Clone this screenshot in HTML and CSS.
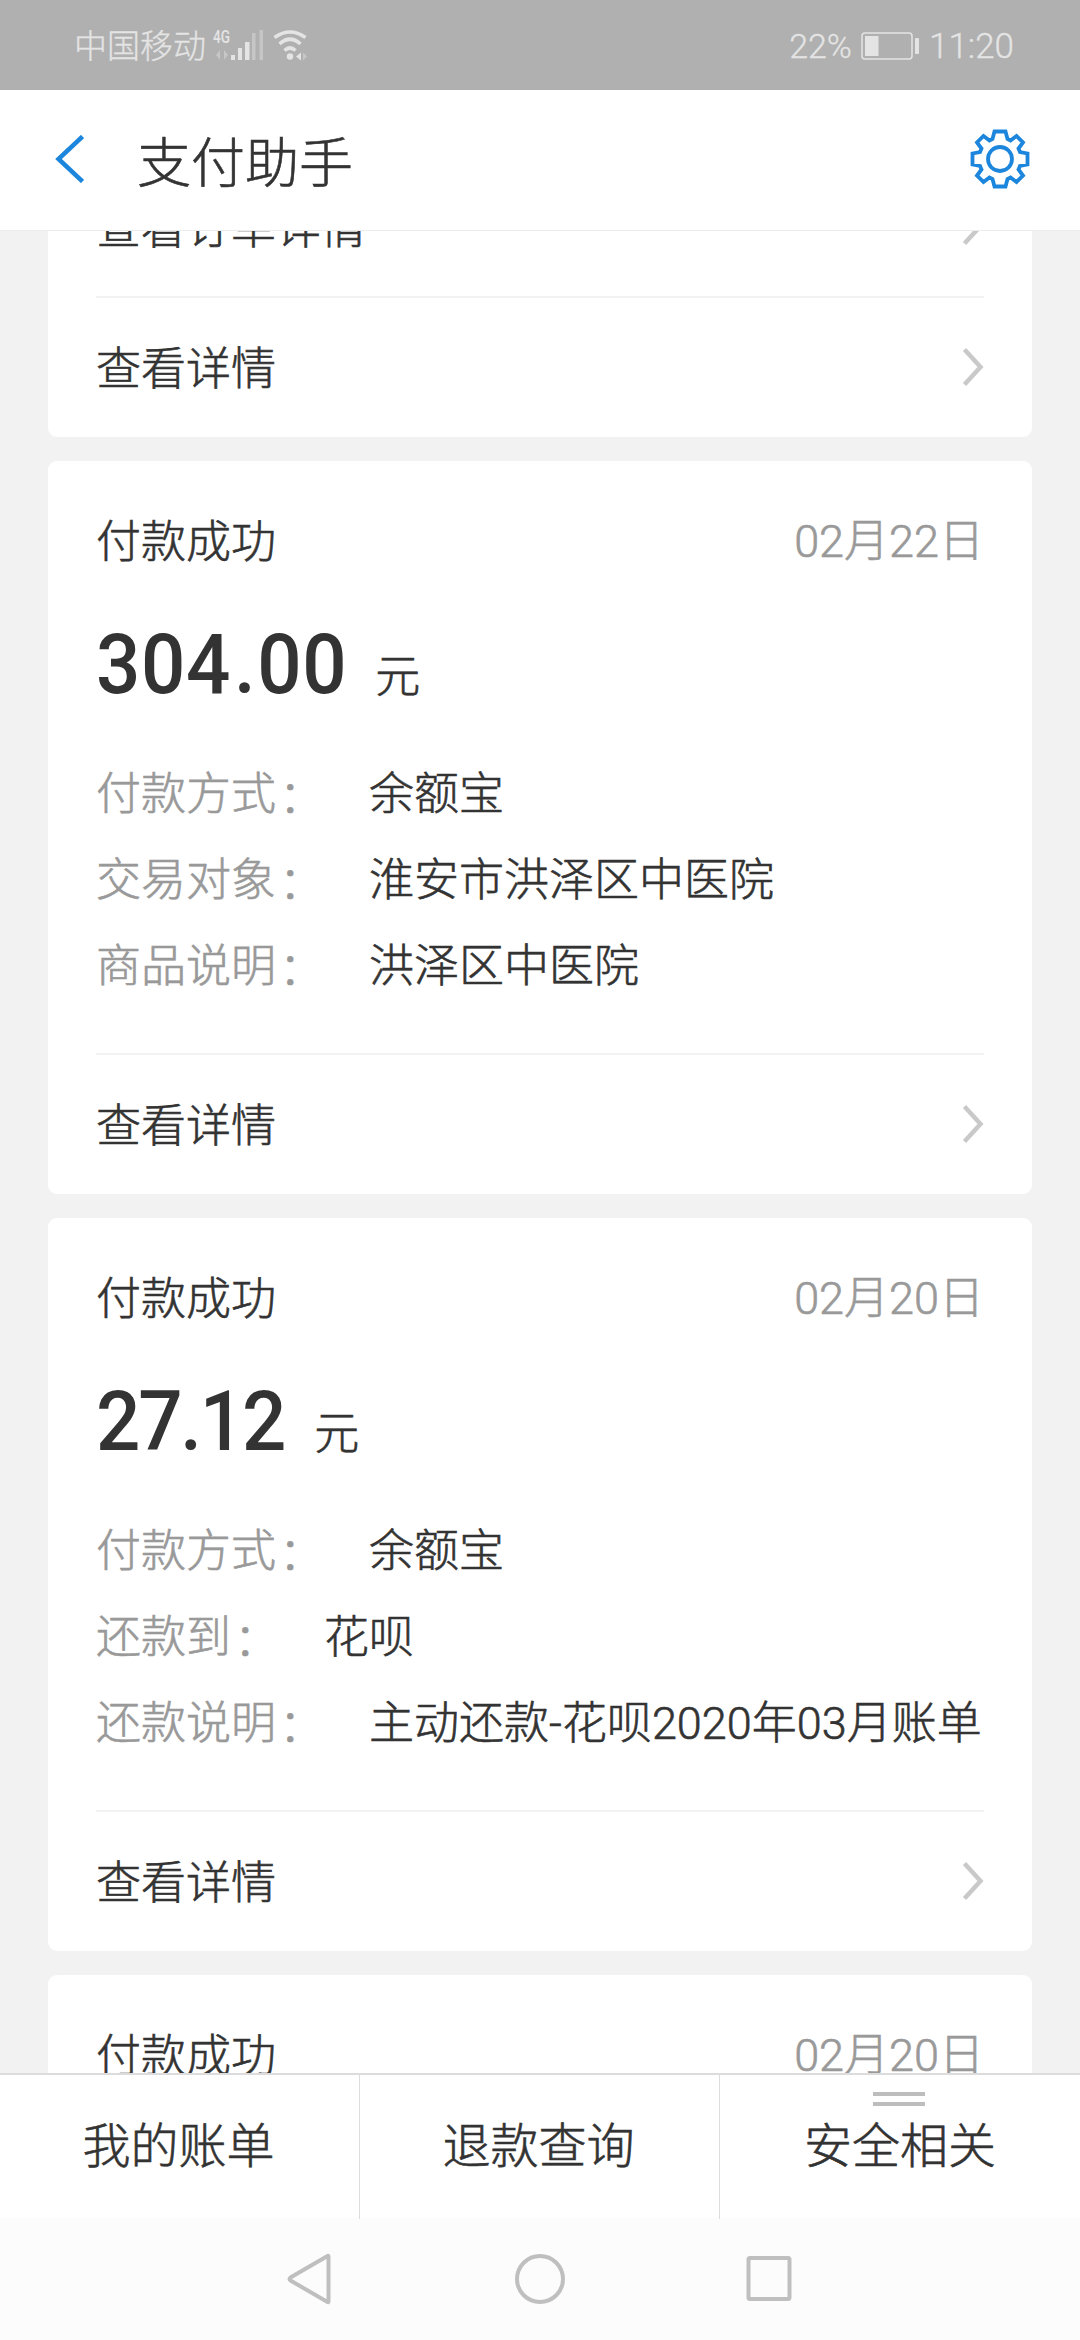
FILE: index.html
```html
<!DOCTYPE html>
<html lang="zh-CN">
<head>
<meta charset="utf-8">
<title>支付助手</title>
<link rel="stylesheet" href="styles.css">
</head>
<body>
<div class="phone">
  <div class="status">
    <span class="carrier">中国移动</span>
    <svg class="signal" viewBox="0 -6 56 48" width="56" height="48">
      <text class="net" x="2" y="16" textLength="17" lengthAdjust="spacingAndGlyphs">4G</text>
      <g class="dim"><path d="M9 23v10l-4-5zM13 23v10l4-5z"/><rect x="41" y="6" width="3.500" height="27"/><rect x="48.500" y="3" width="3.500" height="30"/></g>
      <g class="lit"><rect x="20" y="28" width="4" height="5"/><rect x="27" y="21" width="4" height="12"/><rect x="34" y="15" width="4.500" height="18"/></g>
    </svg>
    <svg class="wifi" viewBox="0 0 40 36" width="40" height="36">
      <g class="arc"><path d="M3.500 10.500Q19 -.5 34.500 10.500"/><path d="M8.500 17Q19 7.500 29.500 17"/><path d="M13.500 23.500Q19 18.500 24.500 23.500"/></g>
      <circle class="lit" cx="19" cy="29.500" r="3.200"/><path class="lit" d="M25 29.500l5-4v8z"/><path class="dim" d="M32 25.500v8l4-4z"/>
    </svg>
    <span class="percent">22%</span>
    <svg class="battery" viewBox="0 0 60 28" width="60" height="28">
      <rect class="shell" x="1" y="1" width="50" height="26" rx="3"/><rect class="lit" x="4" y="4" width="13.500" height="20"/><rect class="lit" x="54" y="6" width="4" height="16" rx="1"/>
    </svg>
    <span class="clock">11:20</span>
  </div>
  <header class="titlebar">
    <svg class="back" viewBox="0 0 30 48" width="30" height="48"><path d="M28.500 1.500L4.500 24L28.500 46.500"/></svg>
    <h1 class="title">支付助手</h1>
    <svg class="gear" viewBox="-30 -30 60 60" width="60" height="60">
      <path d="M-5.500 -27.500H5.500L7.500 -20L10.500 -18.500L16.500 -23L23 -16.500L18.500 -10.500L20 -7L27.500 -5.500V5.500L20 7L18.500 10.500L23 16.500L16.500 23L10.500 18.500L7.500 20L5.500 27.500H-5.500L-7.500 20L-10.500 18.500L-16.500 23L-23 16.500L-18.500 10.500L-20 7L-27.500 5.500V-5.500L-20 -7L-18.500 -10.500L-23 -16.500L-16.500 -23L-10.500 -18.500L-7.500 -20Z"/><circle r="12"/>
    </svg>
  </header>
  <main class="feed">
    <section class="card partial">
      <a class="link"><span>查看订单详情</span><svg class="chev" viewBox="0 0 22 42" width="22" height="42"><path d="M2.500 2.500L18.500 20L2.500 37.500"/></svg></a>
      <a class="link"><span>查看详情</span><svg class="chev" viewBox="0 0 22 42" width="22" height="42"><path d="M2.500 2.500L18.500 20L2.500 37.500"/></svg></a>
    </section>
    <section class="card">
      <div class="head"><span>付款成功</span><time class="date">02月22日</time></div>
      <div class="amount"><b class="num long">304<i class="dot">.</i>00</b><span>元</span></div>
      <dl class="info">
        <div class="row"><dt>付款方式<i class="colon">：</i></dt><dd>余额宝</dd></div>
        <div class="row"><dt>交易对象<i class="colon">：</i></dt><dd>淮安市洪泽区中医院</dd></div>
        <div class="row"><dt>商品说明<i class="colon">：</i></dt><dd>洪泽区中医院</dd></div>
      </dl>
      <a class="link"><span>查看详情</span><svg class="chev" viewBox="0 0 22 42" width="22" height="42"><path d="M2.500 2.500L18.500 20L2.500 37.500"/></svg></a>
    </section>
    <section class="card">
      <div class="head"><span>付款成功</span><time class="date">02月20日</time></div>
      <div class="amount"><b class="num tight">27.12</b><span>元</span></div>
      <dl class="info">
        <div class="row"><dt>付款方式<i class="colon">：</i></dt><dd>余额宝</dd></div>
        <div class="row"><dt>还款到<i class="colon">：</i></dt><dd>花呗</dd></div>
        <div class="row"><dt>还款说明<i class="colon">：</i></dt><dd>主动还款-花呗2020年03月账单</dd></div>
      </dl>
      <a class="link"><span>查看详情</span><svg class="chev" viewBox="0 0 22 42" width="22" height="42"><path d="M2.500 2.500L18.500 20L2.500 37.500"/></svg></a>
    </section>
    <section class="card">
      <div class="head"><span>付款成功</span><time class="date">02月20日</time></div>
    </section>
  </main>
  <nav class="tabs">
    <a class="tab">我的账单</a>
    <a class="tab">退款查询</a>
    <a class="tab more">安全相关</a>
  </nav>
  <div class="sysnav">
    <svg viewBox="0 0 54 54" width="54" height="54"><path d="M44.500 4.500V49.500Q44.500 50.500 43.500 50L6.500 28.500Q4.500 27 6.500 25.500L43.500 4Q44.500 3.500 44.500 4.500Z"/></svg>
    <svg viewBox="0 0 54 54" width="54" height="54"><circle cx="27" cy="27" r="23"/></svg>
    <svg viewBox="0 0 54 54" width="54" height="54"><rect x="6.500" y="6" width="41" height="41" rx="1.500"/></svg>
  </div>
</div>
</body>
</html>
```
FILE: styles.css
```css
*, ::before { box-sizing: border-box; margin: 0; padding: 0; }
body {
  width: 1080px;
  height: 2340px;
  overflow: hidden;
  font-family: Roboto, "Noto Sans CJK SC", sans-serif;
  font-size: 45px;
  font-weight: 300;
  line-height: 60px;
  color: #333;
  background: #f2f2f2;
  -webkit-text-stroke: 0.6px;
}
i { font-style: normal; }
svg { display: block; flex: none; fill: none; }
.phone { display: flex; flex-direction: column; height: 2340px; }

.status {
  display: flex;
  align-items: center;
  height: 90px;
  padding: 0 66px 0 74px;
  font-size: 33px;
  line-height: 40px;
  color: #e4e4e4;
  background: #b0b0b0;
  -webkit-text-stroke: 0.3px;
}
.status span { padding-top: 4px; }
.net { font: 500 19px Roboto, sans-serif; fill: #e4e4e4; }
.lit { fill: #e4e4e4; }
.dim { fill: #c6c6c6; }
.signal { margin-left: 5px; }
.wifi { margin-left: 4px; }
.arc { stroke: #e4e4e4; stroke-width: 3.6; }
.status .percent { margin-left: auto; padding-top: 2px; font-size: 34px; }
.battery { margin: 2px 8px 0 9px; }
.shell { stroke: #e4e4e4; stroke-width: 1.5; }
.clock { font-size: 35px; }

.titlebar {
  display: flex;
  align-items: center;
  height: 141px;
  padding: 0 50px 2px 54px;
  background: #fff;
  border-bottom: 1px solid #ececec;
}
.back { stroke: #1c86dd; stroke-width: 4.5; }
.title { margin-left: 53px; padding-top: 11px; font-size: 54px; font-weight: 300; }
.gear { margin-left: auto; stroke: #1c86dd; stroke-width: 3.8; }

.feed {
  flex: 1;
  display: flex;
  flex-direction: column;
  justify-content: flex-start;
  gap: 24px;
  min-height: 0;
  padding: 0 48px;
  overflow: hidden;
}
.card {
  flex: none;
  display: flex;
  flex-direction: column;
  height: 733px;
  padding: 0 48px;
  background: #fff;
  border-radius: 9px;
}
.partial { justify-content: flex-end; height: 206px; border-radius: 0 0 9px 9px; overflow: hidden; }
.link {
  flex: none;
  display: flex;
  align-items: center;
  justify-content: space-between;
  height: 141px;
  border-top: 2px solid #f2f2f2;
}
.link span { padding-top: 5px; }
.chev { stroke: #c9c9c9; stroke-width: 4.5; }
.head { display: flex; justify-content: space-between; padding-top: 52px; }
.date { margin-top: -1px; color: #999; -webkit-text-stroke: 0.6px; }
.amount { display: flex; align-items: baseline; gap: 28px; height: 100px; margin-top: 42px; line-height: 100px; }
.num {
  display: inline-block;
  font-size: 84px;
  font-weight: 500;
  transform: scaleX(0.93);
  transform-origin: left;
  -webkit-text-stroke: 0;
}
.long { margin-right: -19px; letter-spacing: 0.7px; }
.tight { margin-right: -12px; letter-spacing: -2.4px; }
.dot { margin: 0 1px 0 3px; }
.info { flex: 1; margin-top: 37px; }
.row { display: flex; height: 86px; align-items: center; }
.row dt { color: #999; margin-right: 48px; -webkit-text-stroke: 0.6px; }
.row dd { white-space: nowrap; }
.colon { display: inline-block; width: 45px; height: 60px; padding-left: 3px; white-space: nowrap; vertical-align: top; line-height: 66px; }

.tabs { display: grid; grid-template-columns: 359px 360px 361px; height: 145px; border-top: 2px solid #dcdcdc; background: #fff; }
.tab {
  position: relative;
  padding-right: 2px;
  font-size: 48px;
  line-height: 144px;
  text-align: center;
}
.tab + .tab { border-left: 1px solid #dcdcdc; }
.more { padding-right: 0; }
.more::before {
  content: "";
  position: absolute;
  top: 17px;
  left: 153px;
  width: 52px;
  height: 14px;
  border: solid #bdbdbd;
  border-width: 4px 0;
}
.sysnav {
  display: flex;
  justify-content: center;
  align-items: center;
  gap: 175px;
  height: 122px;
  background: #fcfcfc;
}
.sysnav svg { stroke: #bfbfbf; stroke-width: 4; }
```
